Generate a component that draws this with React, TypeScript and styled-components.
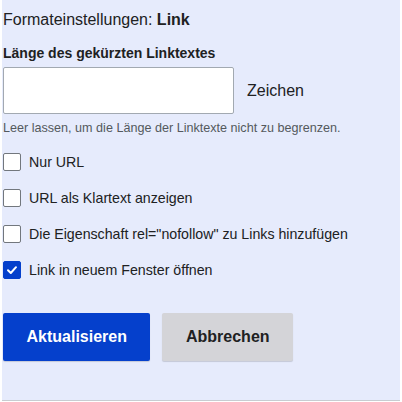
import { FunctionComponent } from 'react';
import styled, { createGlobalStyle } from 'styled-components';

const GlobalStyle = createGlobalStyle`
  html, body {
    margin: 0;
    padding: 0;
    background: #ffffff;
  }
  body {
    font-family: 'Liberation Sans', Arial, sans-serif;
    color: #202122;
  }
`;

const Panel = styled.div`
  margin-left: 2px;
  width: 398px;
  height: 401px;
  box-sizing: border-box;
  background: #e6ebfc;
  border-bottom: 1px solid #c8ccd1;
  padding: 10px 0 0 1px;
`;

const Title = styled.div`
  font-size: 16px;
  line-height: 20px;
  margin: 0 0 14px;

  strong {
    font-weight: bold;
  }
`;

const FieldLabel = styled.label`
  display: block;
  font-size: 14px;
  font-weight: bold;
  line-height: 18px;
  margin-bottom: 5px;
`;

const InputRow = styled.div`
  display: flex;
  align-items: center;
  gap: 13px;
`;

const TextInput = styled.input`
  width: 231px;
  height: 47px;
  box-sizing: border-box;
  border: 1px solid #a2a9b1;
  border-radius: 2px;
  background: #ffffff;
  font-family: inherit;
  font-size: 16px;
  padding: 0 8px;
  margin: 0;
`;

const Unit = styled.span`
  font-size: 16px;
`;

const Hint = styled.p`
  font-size: 12.6px;
  line-height: 16px;
  color: #54595d;
  margin: 6px 0 17px;
`;

const Options = styled.div`
  display: flex;
  flex-direction: column;
  gap: 18px;
`;

const OptionRow = styled.label`
  display: flex;
  align-items: center;
  gap: 8px;
  font-size: 14.2px;
  line-height: 18px;
`;

const Box = styled.span<{ $checked?: boolean }>`
  width: 18px;
  height: 18px;
  box-sizing: border-box;
  border-radius: 2px;
  border: 1px solid ${(p) => (p.$checked ? '#0540cc' : '#72777d')};
  background: ${(p) => (p.$checked ? '#0540cc' : '#ffffff')};
  display: flex;
  align-items: center;
  justify-content: center;
  flex-shrink: 0;
`;

const Actions = styled.div`
  display: flex;
  gap: 12px;
  margin-top: 34px;
`;

const Button = styled.button<{ $primary?: boolean }>`
  height: 48px;
  padding: 0 23.5px;
  border: none;
  border-radius: 2px;
  font-family: inherit;
  font-size: 16px;
  font-weight: bold;
  color: ${(p) => (p.$primary ? '#ffffff' : '#202122')};
  background: ${(p) => (p.$primary ? '#0540cc' : '#d4d4d8')};
  box-shadow: 0 1px 1px rgba(0, 0, 0, 0.15);
  cursor: pointer;
`;

const Check: FunctionComponent = () => (
  <svg width="12" height="12" viewBox="0 0 12 12">
    <path
      d="M2 6.3 L4.8 9 L10 3.2"
      fill="none"
      stroke="#ffffff"
      strokeWidth="2"
      strokeLinecap="round"
      strokeLinejoin="round"
    />
  </svg>
);

const options = [
  { label: 'Nur URL', checked: false },
  { label: 'URL als Klartext anzeigen', checked: false },
  { label: 'Die Eigenschaft rel="nofollow" zu Links hinzufügen', checked: false },
  { label: 'Link in neuem Fenster öffnen', checked: true },
];

export default function App() {
  return (
    <>
      <GlobalStyle />
      <Panel>
        <Title>
          Formateinstellungen: <strong>Link</strong>
        </Title>
        <FieldLabel htmlFor="link-length">Länge des gekürzten Linktextes</FieldLabel>
        <InputRow>
          <TextInput id="link-length" type="text" />
          <Unit>Zeichen</Unit>
        </InputRow>
        <Hint>Leer lassen, um die Länge der Linktexte nicht zu begrenzen.</Hint>
        <Options>
          {options.map((o) => (
            <OptionRow key={o.label}>
              <Box $checked={o.checked}>{o.checked && <Check />}</Box>
              {o.label}
            </OptionRow>
          ))}
        </Options>
        <Actions>
          <Button $primary>Aktualisieren</Button>
          <Button>Abbrechen</Button>
        </Actions>
      </Panel>
    </>
  );
}
